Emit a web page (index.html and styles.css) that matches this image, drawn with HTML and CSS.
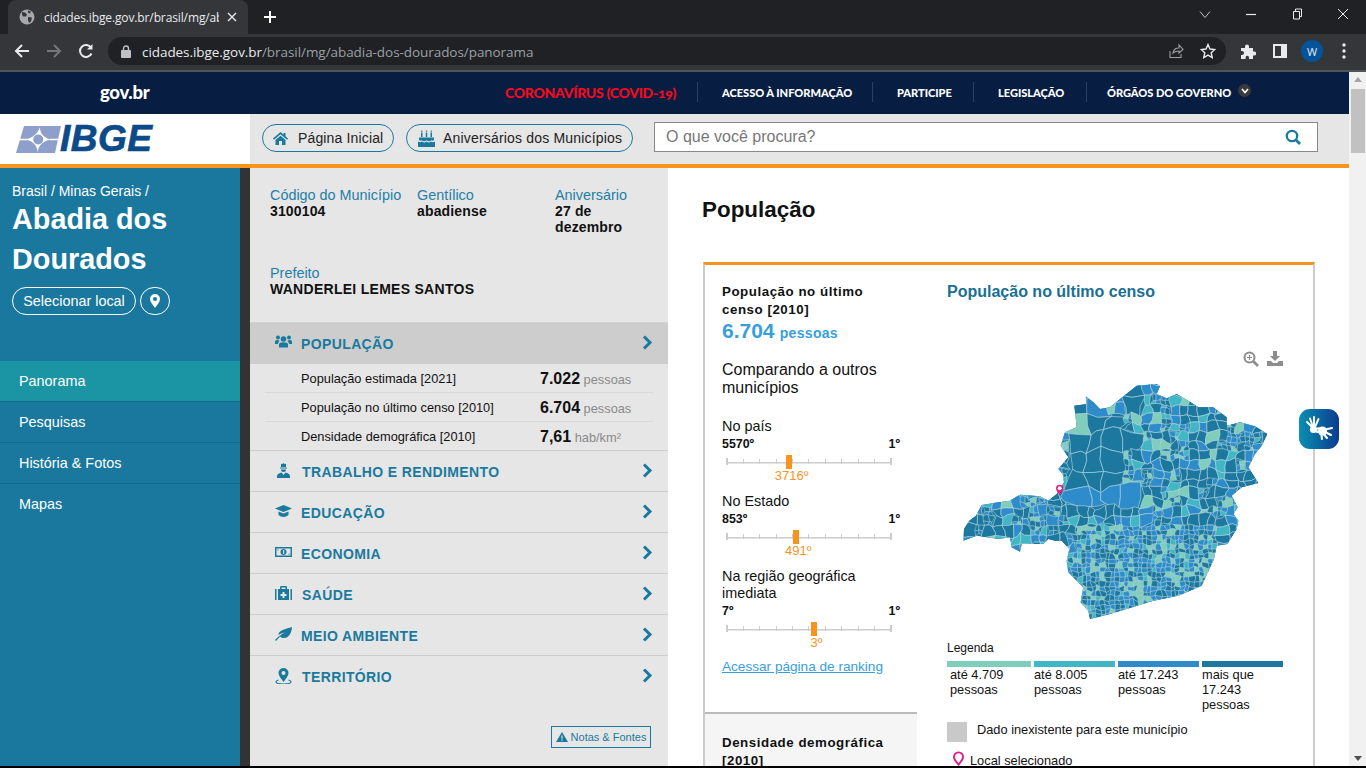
FILE: index.html
```html
<!DOCTYPE html>
<html lang="pt-BR">
<head>
<meta charset="utf-8">
<title>Abadia dos Dourados</title>
<link rel="stylesheet" href="styles.css">
</head>
<body>
<div class="window">
  <div class="tabstrip">
    <div class="tab">
      <svg class="globe" width="16" height="16" viewBox="0 0 16 16"><circle cx="8" cy="8" r="7.5" fill="#a6a8ab"/><path d="M3 3l3 .5 2 2-1 2-3 0-1-2zM9 8l4 .5-1 4-2 1.5-1-3zM9 1.5l3 1-1 2-2-1z" fill="#35363a"/></svg>
      <span class="tab-title">cidades.ibge.gov.br/brasil/mg/ab</span>
      <svg class="tab-x" width="10" height="10" viewBox="0 0 10 10"><path d="M1 1l8 8M9 1l-8 8" stroke="#e8eaed" stroke-width="1.4"/></svg>
    </div>
    <svg class="plus" width="12" height="12" viewBox="0 0 12 12"><path d="M6 0v12M0 6h12" stroke="#fff" stroke-width="2"/></svg>
    <div class="win-controls">
      <svg width="12" height="12" viewBox="0 0 12 12"><path d="M1 3.500l5 6 5-6" fill="none" stroke="#bdc1c6"/></svg>
      <svg width="12" height="12" viewBox="0 0 12 12"><path d="M1 6.500h10" stroke="#e8eaed" stroke-width="1.200"/></svg>
      <svg width="12" height="12" viewBox="0 0 12 12"><path d="M2.500 3.500h6v7.500h-6zM4.500 3.500V1h6v7.500H8.500" fill="none" stroke="#e8eaed"/></svg>
      <svg width="12" height="12" viewBox="0 0 12 12"><path d="M1 1l10 10M11 1L1 11" stroke="#e8eaed" stroke-width="1"/></svg>
    </div>
  </div>
  <div class="toolbar">
    <svg class="tool back" width="16" height="16" viewBox="0 0 16 16"><path d="M15 8H2M8 2L2 8l6 6" fill="none" stroke="#e8eaed" stroke-width="2"/></svg>
    <svg class="tool fwd" width="16" height="16" viewBox="0 0 16 16"><path d="M1 8h13M8 2l6 6-6 6" fill="none" stroke="#75777a" stroke-width="2"/></svg>
    <svg class="tool reload" width="16" height="16" viewBox="0 0 16 16"><path d="M13.500 10.500A6 6 0 1 1 13 4.600" fill="none" stroke="#e8eaed" stroke-width="2"/><path d="M14.500 1v5.500H9z" fill="#e8eaed"/></svg>
    <div class="omnibox">
      <svg width="10" height="13" viewBox="0 0 10 13"><path d="M2.500 5.500V3.500a2.500 2.500 0 0 1 5 0v2" fill="none" stroke="#bdc1c6" stroke-width="1.400"/><rect y="5" width="10" height="8" rx="1" fill="#bdc1c6"/></svg>
      <span class="url"><b>cidades.ibge.gov.br</b>/brasil/mg/abadia-dos-dourados/panorama</span>
      <svg class="share" width="16" height="16" viewBox="0 0 16 16"><path d="M2 8v6.500h11V11M5 10c.5-3.500 3-5 6-5V2l4 4.500L11 10V8c-2.500 0-4.500.5-6 2z" fill="none" stroke="#9aa0a6" stroke-width="1.100"/></svg>
      <svg class="star" width="16" height="16" viewBox="0 0 16 16"><path d="M8 1.500l2 4.500 4.800.5-3.600 3.200 1 4.800L8 12.100 3.800 14.500l1-4.800L1.200 6.500 6 6z" fill="none" stroke="#e8eaed" stroke-width="1.400"/></svg>
    </div>
    <svg class="ext" width="16" height="16" viewBox="0 0 16 16"><path d="M1 5h4V3.500a2 2 0 0 1 4 0V5h4v3.500h1.200a2 2 0 0 1 0 4H13V16H9v-1.500a1.700 1.700 0 0 0-3.400 0V16H1v-4h1a2 2 0 0 0 0-4H1z" fill="#e8eaed"/></svg>
    <svg class="panel-ic" width="14" height="14" viewBox="0 0 14 14"><path d="M0 0h14v14H0zM2 2v10h6V2z" fill="#e8eaed" fill-rule="evenodd"/><rect x="2" y="2" width="6" height="10" fill="#35363a"/></svg>
    <span class="avatar">W</span>
    <svg class="dots" width="4" height="16" viewBox="0 0 4 16"><circle cx="2" cy="2" r="1.700" fill="#e8eaed"/><circle cx="2" cy="8" r="1.700" fill="#e8eaed"/><circle cx="2" cy="14" r="1.700" fill="#e8eaed"/></svg>
  </div>
  <div class="viewport">
    <div class="page">
      <div class="govbar">
        <a class="gov-logo">gov.br</a>
        <a class="covid">CORONAVÍRUS (COVID-19)</a>
        <ul class="gov-links">
          <li class="gov-first">ACESSO À INFORMAÇÃO</li>
          <li class="gov-part">PARTICIPE</li>
          <li class="gov-leg">LEGISLAÇÃO</li>
          <li class="gov-org">ÓRGÃOS DO GOVERNO <span class="gov-badge"><svg width="8" height="6" viewBox="0 0 8 6"><path d="M1 1l3 3.500L7 1" fill="none" stroke="#fff" stroke-width="1.600"/></svg></span></li>
        </ul>
      </div>
      <div class="sitehead">
        <div class="logo">
          <svg width="45" height="27" viewBox="0 0 45 27"><path d="M8 0h37l-6 27H0z" fill="#8e9fcb"/><path d="M24 1c0 6 3 10.500 11 12.500C27 15 23 19 21.500 26 21 19 17 15 9 13.500 17 12 22 7 24 1z" fill="#fff"/><circle cx="22.200" cy="13.500" r="5" fill="#8e9fcb"/><path d="M1 13.500h10M34 13.500h9" stroke="#fff" stroke-width="1.300"/></svg>
          <span class="logo-word">IBGE</span>
        </div>
        <div class="head-tools">
          <a class="pill pill-home">
            <svg width="15" height="13" viewBox="0 0 15 13"><path d="M7.500 0L0 6.500l1 1.200 6.500-5.500L14 7.700l1-1.200-2.500-2.200V1h-2v1.600zM2.500 8v5h3.500V9h3v4h3.500V8L7.500 3.700z" fill="#1a7a9e"/></svg>
            Página Inicial
          </a>
          <a class="pill pill-bday">
            <svg width="17" height="17" viewBox="0 0 17 17"><path d="M1 7.500h15V10c-1 .9-1.800.9-2.600.2-1.600 1.300-3.200 1.300-4.900 0-1.700 1.300-3.300 1.300-4.900 0-.8.700-1.600.7-2.600-.2zM0 11.500c1.400 1.100 2.600 1.100 4 0 1.500 1.200 3 1.200 4.500 0 1.500 1.200 3 1.200 4.500 0 1.400 1.100 2.600 1.100 4 0V17H0zM3 2.500h1.500v4.500H3zM7.750 2.500h1.500v4.500h-1.500zM12.500 2.500H14v4.500h-1.500zM3.750 0l.9 1.700h-1.800zM8.500 0l.9 1.700H7.600zM13.250 0l.9 1.700h-1.800z" fill="#1a7a9e"/></svg>
            Aniversários dos Municípios
          </a>
          <div class="search">
            <span class="search-ph">O que você procura?</span>
            <svg width="16" height="16" viewBox="0 0 16 16"><circle cx="7" cy="7" r="5.200" fill="none" stroke="#1a7a9e" stroke-width="2.300"/><path d="M10.800 10.800l4.200 4.200" stroke="#1a7a9e" stroke-width="2.800"/></svg>
          </div>
        </div>
      </div>
      <div class="columns">
        <aside class="side">
          <div class="crumbs">Brasil / Minas Gerais /</div>
          <h1 class="city">Abadia dos Dourados</h1>
          <div class="side-btns">
            <a class="side-btn">Selecionar local</a>
            <a class="side-pin"><svg width="10" height="14" viewBox="0 0 10 14"><path d="M5 0a5 5 0 0 1 5 5c0 3-3 6-5 9-2-3-5-6-5-9a5 5 0 0 1 5-5zm0 3a2 2 0 1 0 0 4 2 2 0 0 0 0-4z" fill="#fff" fill-rule="evenodd"/></svg></a>
          </div>
          <nav class="side-nav">
            <a class="nav-item nav-on">Panorama</a>
            <a class="nav-item">Pesquisas</a>
            <a class="nav-item">História &amp; Fotos</a>
            <a class="nav-item nav-end">Mapas</a>
          </nav>
        </aside>
        <div class="divider"></div>
        <section class="panel">
          <div class="facts">
            <div class="fact"><span class="fact-k">Código do Município</span><b>3100104</b></div>
            <div class="fact"><span class="fact-k">Gentílico</span><b>abadiense</b></div>
            <div class="fact"><span class="fact-k">Aniversário</span><b>27 de dezembro</b></div>
          </div>
          <div class="mayor"><span class="fact-k">Prefeito</span><b>WANDERLEI LEMES SANTOS</b></div>
          <div class="accordion">
            <div class="acc-head acc-open">
              <svg class="acc-ic" width="17" height="14" viewBox="0 0 17 14"><circle cx="8.500" cy="4" r="2.800" fill="#1a7a9e"/><circle cx="3" cy="2.500" r="2" fill="#1a7a9e"/><circle cx="14" cy="2.500" r="2" fill="#1a7a9e"/><path d="M4 12.500V9.500C4 8 5.500 7.300 8.500 7.300S13 8 13 9.500v3zM0 9V6.500C0 5.500 1 5 3 5l1.500 1C3.500 7 3 7.700 3 9zM17 9V6.500C17 5.500 16 5 14 5l-1.500 1c1 1 1.500 1.700 1.500 3z" fill="#1a7a9e"/></svg>
              <span class="acc-t">POPULAÇÃO</span>
              <svg class="acc-chev" width="11" height="15" viewBox="0 0 11 15"><path d="M2 1.500L8 7.500 2 13.500" fill="none" stroke="#1a7a9e" stroke-width="3"/></svg>
            </div>
            <div class="rows">
              <div class="row"><span class="row-k">População estimada [2021]</span><span class="row-v"><b>7.022</b> pessoas</span></div>
              <div class="row"><span class="row-k">População no último censo [2010]</span><span class="row-v"><b>6.704</b> pessoas</span></div>
              <div class="row"><span class="row-k">Densidade demográfica [2010]</span><span class="row-v"><b>7,61</b> hab/km²</span></div>
            </div>
            <div class="acc-head">
              <svg class="acc-ic" width="17" height="15" viewBox="0 0 17 15"><path d="M8.500 0l1 1 1.500-.3V4H6V.7L7.500 1zM5 4.500h7v1H5zM6 6.500h5a2.500 2.500 0 0 1-5 0zM2 15v-2c0-2 2.500-3 4.500-3.500L8.500 12l2-2.500C12.500 10 15 11 15 13v2z" fill="#1a7a9e"/></svg>
              <span class="acc-t acc-nudge">TRABALHO E RENDIMENTO</span>
              <svg class="acc-chev" width="11" height="15" viewBox="0 0 11 15"><path d="M2 1.500L8 7.500 2 13.500" fill="none" stroke="#1a7a9e" stroke-width="3"/></svg>
            </div>
            <div class="acc-head">
              <svg class="acc-ic" width="17" height="12" viewBox="0 0 17 12"><path d="M8.500 0L17 3.500 8.500 7 0 3.500zM3.500 6.500l5 2 5-2V10c-1.500 1.300-3 2-5 2s-3.500-.7-5-2z" fill="#1a7a9e"/></svg>
              <span class="acc-t">EDUCAÇÃO</span>
              <svg class="acc-chev" width="11" height="15" viewBox="0 0 11 15"><path d="M2 1.500L8 7.500 2 13.500" fill="none" stroke="#1a7a9e" stroke-width="3"/></svg>
            </div>
            <div class="acc-head">
              <svg class="acc-ic" width="17" height="12" viewBox="0 0 17 12"><path d="M0 1h17v10H0zM1.500 2.500v7h14v-7z" fill="#1a7a9e" fill-rule="evenodd"/><circle cx="8.500" cy="6" r="3" fill="#1a7a9e"/><rect x="8" y="4" width="1.200" height="4" fill="#e6e6e6"/><path d="M2.500 3.500h1.500L2.500 5zM14.500 8.500H13l1.500-1.500z" fill="#1a7a9e"/></svg>
              <span class="acc-t">ECONOMIA</span>
              <svg class="acc-chev" width="11" height="15" viewBox="0 0 11 15"><path d="M2 1.500L8 7.500 2 13.500" fill="none" stroke="#1a7a9e" stroke-width="3"/></svg>
            </div>
            <div class="acc-head">
              <svg class="acc-ic" width="17" height="14" viewBox="0 0 17 14"><path d="M0 3h1.500v11H0zM15.500 3H17v11h-1.500zM3 3h2V1.500C5 .5 5.500 0 6.500 0h4c1 0 1.500.5 1.500 1.500V3h2v11H3zM6.500 1.500V3h4V1.500zM7.500 6v2h-2v2h2v2h2v-2h2V8h-2V6z" fill="#1a7a9e" fill-rule="evenodd"/></svg>
              <span class="acc-t acc-nudge">SAÚDE</span>
              <svg class="acc-chev" width="11" height="15" viewBox="0 0 11 15"><path d="M2 1.500L8 7.500 2 13.500" fill="none" stroke="#1a7a9e" stroke-width="3"/></svg>
            </div>
            <div class="acc-head">
              <svg class="acc-ic" width="17" height="14" viewBox="0 0 17 14"><path d="M17 0c-.5 6-3 11-8 11-1.500 0-3-.5-4-1.500C4 10.500 2.500 12.500 1 14L0 13c1.500-1.500 6-6 10-7.500C7 6 5 7 3.500 8 3.500 3 10 2.500 17 0z" fill="#1a7a9e"/></svg>
              <span class="acc-t">MEIO AMBIENTE</span>
              <svg class="acc-chev" width="11" height="15" viewBox="0 0 11 15"><path d="M2 1.500L8 7.500 2 13.500" fill="none" stroke="#1a7a9e" stroke-width="3"/></svg>
            </div>
            <div class="acc-head acc-last">
              <svg class="acc-ic" width="17" height="16" viewBox="0 0 17 16"><path d="M8.500 0a5 5 0 0 1 5 5c0 3-3 6-5 9-2-3-5-6-5-9a5 5 0 0 1 5-5zm0 3a2 2 0 1 0 0 4 2 2 0 0 0 0-4z" fill="#1a7a9e" fill-rule="evenodd"/><path d="M3.500 12c-2 .5-2.500 1-2.500 1.800C1 15 4 16 8.500 16s7.500-1 7.500-2.200c0-.8-.5-1.300-2.500-1.800" fill="none" stroke="#1a7a9e" stroke-width="1.200"/></svg>
              <span class="acc-t acc-nudge">TERRITÓRIO</span>
              <svg class="acc-chev" width="11" height="15" viewBox="0 0 11 15"><path d="M2 1.500L8 7.500 2 13.500" fill="none" stroke="#1a7a9e" stroke-width="3"/></svg>
            </div>
          </div>
          <div class="notes-wrap">
            <a class="notes"><svg width="12" height="10" viewBox="0 0 12 10"><path d="M6 0l6 10H0zM5.400 3.500v3.300h1.200V3.500zM5.400 7.500v1.200h1.200V7.500z" fill="#1a7a9e" fill-rule="evenodd"/></svg>Notas &amp; Fontes</a>
          </div>
        </section>
        <main class="content">
          <h2 class="content-title">População</h2>
          <div class="card">
            <div class="card-left">
              <div class="kpi">
                <h3 class="kpi-t">População no último censo [2010]</h3>
                <div class="kpi-v"><b>6.704</b> <span>pessoas</span></div>
                <p class="compare">Comparando a outros municípios</p>
                <div class="rank">
                  <div class="rank-t">No país</div>
                  <div class="rank-ends"><b>5570º</b><b>1º</b></div>
                  <div class="slider"><i></i><i></i><i></i><i></i><i></i><i></i><i></i><i></i><i></i><i></i><i></i><span class="mark" style="left:38%"><u></u><em>3716º</em></span></div>
                </div>
                <div class="rank">
                  <div class="rank-t">No Estado</div>
                  <div class="rank-ends"><b>853º</b><b>1º</b></div>
                  <div class="slider"><i></i><i></i><i></i><i></i><i></i><i></i><i></i><i></i><i></i><i></i><i></i><span class="mark" style="left:42%"><u></u><em>491º</em></span></div>
                </div>
                <div class="rank">
                  <div class="rank-t">Na região geográfica imediata</div>
                  <div class="rank-ends"><b>7º</b><b>1º</b></div>
                  <div class="slider"><i></i><i></i><i></i><i></i><i></i><i></i><i></i><i></i><i></i><i></i><i></i><span class="mark" style="left:53%"><u></u><em>3º</em></span></div>
                </div>
                <a class="rank-link">Acessar página de ranking</a>
              </div>
              <div class="kpi-next"><h3 class="kpi-t">Densidade demográfica [2010]</h3></div>
            </div>
            <div class="card-right">
              <h3 class="map-title">População no último censo</h3>
              <div class="map-tools">
                <svg width="16" height="16" viewBox="0 0 16 16"><circle cx="6.500" cy="6.500" r="5" fill="none" stroke="#8c8c8c" stroke-width="2"/><path d="M10.500 10.500L15 15" stroke="#8c8c8c" stroke-width="2.600"/><path d="M4 6.500h5M6.500 4v5" stroke="#8c8c8c" stroke-width="1.200"/></svg>
                <svg width="16" height="15" viewBox="0 0 16 15"><path d="M6 0h4v5h3l-5 5-5-5h3zM0 10h4l2 2h4l2-2h4v5H0z" fill="#8c8c8c"/></svg>
              </div>
              <svg id="mg-map" class="map" viewBox="21 90 1008 810" role="img" aria-label="Mapa de Minas Gerais"></svg>
              <div class="legend">
                <div class="legend-t">Legenda</div>
                <div class="legend-grid">
                  <div class="lg lg1">até 4.709 pessoas</div>
                  <div class="lg lg2">até 8.005 pessoas</div>
                  <div class="lg lg3">até 17.243 pessoas</div>
                  <div class="lg lg4">mais que 17.243 pessoas</div>
                </div>
                <div class="nodata"><span class="swatch"></span><span class="nodata-t">Dado inexistente para este município</span></div>
                <div class="selected"><svg width="11" height="15" viewBox="0 0 12 15"><path d="M6 .8a5 5 0 0 1 5 5c0 3-3 5.500-5 8.500-2-3-5-5.500-5-8.500a5 5 0 0 1 5-5z" fill="none" stroke="#e6197e" stroke-width="2"/></svg><span class="selected-t">Local selecionado</span></div>
              </div>
            </div>
          </div>
        </main>
      </div>
      <a class="libras"><svg width="32" height="30" viewBox="0 0 32 30"><g stroke="#fff" stroke-linecap="round" fill="none"><path d="M10 14L4 8M10 13L7 4.500M11 13V3M12 13L15.500 5M12 15l6-1" stroke-width="1.900"/><path d="M20 16l9-2M20 17l8 4M19 18l5 6M18 18l1 7M20 15l-6 3" stroke-width="2.100"/></g><circle cx="10.500" cy="15.500" r="3.600" fill="#fff"/><circle cx="19.500" cy="17" r="4.600" fill="#fff"/></svg></a>
    </div>
    <div class="scrollbar">
      <span class="sb-up"></span>
      <span class="sb-thumb"></span>
      <span class="sb-down"></span>
    </div>
  </div>
</div>
<script src="map.js"></script>
</body>
</html>
```

FILE: styles.css
```css
* { box-sizing: border-box; }
html, body { margin: 0; height: 100%; overflow: hidden; background: #000; }
body { font-family: "Liberation Sans", Arial, sans-serif; color: #111; }
h1, h2, h3, p, ul { margin: 0; padding: 0; }
b { font-weight: 700; }

.window { width: 1366px; height: 766px; display: flex; flex-direction: column; overflow: hidden; position: relative; }

/* browser chrome */
.tabstrip { height: 34px; flex: none; background: #202124; display: flex; align-items: center; padding-left: 8px; }
.tab { width: 240px; height: 34px; background: #35363a; border-radius: 8px 8px 0 0; display: flex; align-items: center; padding: 0 11px; }
.globe { flex: none; margin-right: 9px; }
.tab-title { width: 175px; overflow: hidden; white-space: nowrap; color: #e8eaed; font: 12px "Open Sans", sans-serif; letter-spacing: -.12px; }
.tab-x { margin-left: 8px; flex: none; }
.plus { margin-left: 16px; }
.win-controls { margin-left: auto; display: flex; gap: 34px; padding-right: 17px; align-items: center; margin-top: -6px; }
.toolbar { height: 36px; flex: none; background: #35363a; display: flex; align-items: center; padding: 0 0 2px 14px; position: relative; }
.tool { flex: none; margin-right: 16px; }
.omnibox { width: 1118px; height: 28px; margin-left: -2px; background: #202124; border-radius: 14px; display: flex; align-items: center; padding: 0 10px 0 13px; flex: none; }
.url { margin-left: 11px; padding-top: 1px; font: 13.500px "Open Sans", sans-serif; color: #9aa0a6; letter-spacing: -.06px; white-space: nowrap; }
.url b { font-weight: 400; color: #e8eaed; }
.share { margin-left: auto; }
.star { margin-left: 16px; }
.ext { margin-left: 14px; flex: none; }
.panel-ic { margin-left: 17px; flex: none; }
.avatar { margin-left: 14px; width: 22px; height: 22px; border-radius: 50%; background: #04549b; color: #e8eaed; font: 11px "Open Sans", sans-serif; display: flex; align-items: center; justify-content: center; flex: none; }
.dots { margin-left: 19px; flex: none; }

/* page */
.viewport { flex: 1; min-height: 0; display: flex; border-top: 2px solid #50565c; }
.page { width: 1349px; flex: none; display: flex; flex-direction: column; position: relative; background: #fff; overflow: hidden; }
.scrollbar { width: 17px; flex: none; background: #f1f1f1; position: relative; display: flex; flex-direction: column; align-items: center; }
.sb-up { margin-top: 5px; width: 0; height: 0; border: 4px solid transparent; border-top: 0; border-bottom: 5px solid #a3a3a3; }
.sb-thumb { width: 14px; height: 64px; margin-top: 7px; background: #c1c1c1; }
.sb-down { margin-top: auto; margin-bottom: 5px; width: 0; height: 0; border: 4px solid transparent; border-bottom: 0; border-top: 5px solid #505050; }

.govbar { height: 42px; flex: none; background: #071d41; color: #fff; display: flex; align-items: center; font-family: Lato, sans-serif; font-weight: 900; position: relative; padding-bottom: 2px; }
.gov-logo { margin-left: 100px; width: 50px; font-size: 18.500px; letter-spacing: -.3px; white-space: nowrap; }
.covid { margin-left: 355px; width: 192px; color: #f5091f; font-size: 14px; letter-spacing: -.3px; white-space: nowrap; font-variant-numeric: oldstyle-nums; }
.gov-links { list-style: none; display: flex; align-items: center; font-size: 11.100px; letter-spacing: -.05px; }
.gov-links li { height: 20px; display: flex; align-items: center; white-space: nowrap; }
.gov-first { padding: 0 20px 0 24px; border-left: 1px solid #2a3f63; width: 175px; }
.gov-part { padding: 0 20px 0 24px; border-left: 1px solid #2a3f63; width: 101px; }
.gov-leg { padding: 0 20px 0 24px; border-left: 1px solid #2a3f63; width: 113px; }
.gov-org { padding: 0 0 0 20px; border-left: 1px solid #2a3f63; }
.gov-badge { margin: -3px 0 0 7px; width: 13px; height: 13px; border-radius: 50%; background: #3a3a3a; display: inline-flex; align-items: center; justify-content: center; }

.sitehead { height: 54px; flex: none; display: flex; background: #e6e6e6; border-bottom: 4px solid #f7941d; }
.logo { width: 250px; background: #fff; display: flex; align-items: center; padding-left: 16px; flex: none; }
.logo-word { font: italic 700 37px "Liberation Sans", sans-serif; color: #0c4a8a; margin-left: -1px; letter-spacing: .5px; -webkit-text-stroke: .7px #0c4a8a; }
.head-tools { flex: 1; display: flex; align-items: center; padding-left: 12px; }
.pill { height: 28px; border: 1.500px solid #1a7a9e; border-radius: 14px; display: flex; align-items: center; font-size: 14px; color: #222; gap: 9px; flex: none; margin-top: -2px; }
.pill-home { width: 132px; padding-left: 10px; gap: 10px; letter-spacing: .15px; }
.pill-bday { width: 227px; margin-left: 12px; padding-left: 11px; letter-spacing: .18px; gap: 8px; }
.search { width: 664px; height: 30px; margin-left: 21px; margin-top: -4px; background: #fff; border: 1px solid #888; display: flex; align-items: center; justify-content: space-between; padding: 0 16px 0 11px; }
.search-ph { font-size: 16px; color: #777; }

.columns { flex: 1; min-height: 0; display: flex; }
.side { width: 240px; flex: none; background: #1a789e; color: #fff; padding-top: 15px; }
.crumbs { padding-left: 12px; font-size: 14px; line-height: 16px; }
.city { padding: 0 12px; font-size: 28.800px; font-weight: 700; line-height: 40px; }
.side-btns { display: flex; gap: 4px; padding-left: 12px; margin-top: 8px; }
.side-btn { width: 124px; height: 28px; border: 1px solid #fff; border-radius: 14px; font-size: 14.400px; display: flex; align-items: center; justify-content: center; }
.side-pin { width: 30px; height: 28px; border: 1px solid #fff; border-radius: 14px; display: flex; align-items: center; justify-content: center; }
.side-nav { margin-top: 46px; display: flex; flex-direction: column; }
.nav-item { height: 41px; padding-left: 19px; display: flex; align-items: center; font-size: 14.400px; border-bottom: 1px solid #16688a; }
.nav-on { background: #1b95a3; }
.nav-end { border-bottom-color: transparent; }
.divider { width: 10px; flex: none; background: #333; }

.panel { width: 418px; flex: none; background: #e6e6e6; display: flex; flex-direction: column; }
.facts { display: flex; padding: 19px 0 0 20px; line-height: 16px; height: 97px; }
.fact { display: flex; flex-direction: column; }
.fact:nth-child(1) { width: 147px; }
.fact:nth-child(2) { width: 138px; }
.fact:nth-child(3) { width: 90px; }
.fact b { font-size: 14px; color: #111; letter-spacing: .15px; }
.fact-k { color: #1f7fa6; font-size: 14.400px; line-height: 16px; }
.mayor { padding: 0 0 0 20px; font-size: 14px; line-height: 16px; display: flex; flex-direction: column; height: 57px; }
.mayor b { letter-spacing: .28px; }
.accordion { border-top: 1px solid #d2d2d2; }
.acc-head { height: 41px; display: flex; align-items: center; border-bottom: 1px solid #cdcdcd; padding-left: 25px; position: relative; }
.acc-open { background: #cdcdcd; }
.acc-ic { flex: none; width: 17px; margin-right: 9px; margin-top: -2px; }
.acc-t { color: #1a7a9e; font-size: 14px; font-weight: 700; letter-spacing: .38px; white-space: nowrap; padding-top: 1px; }
.acc-nudge { margin-left: 1px; }
.acc-chev { position: absolute; left: 392px; top: 12px; }
.acc-last { border-bottom: 0; }
.rows { padding: 0 15px; border-bottom: 1px solid #cdcdcd; }
.row { height: 29px; display: flex; align-items: center; border-bottom: 1px solid #d9d9d9; padding: 1px 0 0 36px; font-size: 12.800px; }
.row:last-child { border-bottom: 0; height: 28px; }
.row-k { width: 239px; flex: none; }
.row-v { color: #8a8a8a; font-size: 12.800px; white-space: nowrap; }
.row-v b { color: #111; font-size: 16px; }
.notes-wrap { margin-top: 29px; padding-right: 17px; display: flex; justify-content: flex-end; }
.notes { width: 100px; height: 22px; border: 1px solid #1a7a9e; color: #1a7a9e; display: flex; align-items: center; justify-content: center; gap: 3px; font-size: 11px; }

.content { flex: 1; min-width: 0; background: #fff; padding: 30px 33px 0 34px; }
.content-title { font-size: 22.400px; font-weight: 700; line-height: 24px; letter-spacing: .02px; color: #111; }
.card { margin: 40px 0 0 1px; width: 612px; display: flex; border-top: 3px solid #f7941d; border-left: 2px solid #ccc; border-right: 2px solid #ccc; height: 520px; }
.card-left { width: 212px; flex: none; display: flex; flex-direction: column; }
.kpi { padding: 18px 17px 0 17px; height: 447px; flex: none; }
.kpi-t { font-size: 13.300px; font-weight: 700; line-height: 18px; letter-spacing: .55px; color: #111; }
.kpi-v { color: #37a0dc; font-size: 14px; font-weight: 700; line-height: 24px; letter-spacing: .3px; }
.kpi-v b { font-size: 21px; letter-spacing: 0; margin-right: 1px; }
.compare { margin-top: 16px; font-size: 16px; line-height: 18px; }
.rank { margin-top: 21px; }
.rank + .rank { margin-top: 14px; }
.rank-t { font-size: 14.400px; line-height: 17px; }
.rank-ends { display: flex; justify-content: space-between; font-size: 12.400px; line-height: 17px; width: 178px; margin-top: 1px; }
.slider { position: relative; height: 26px; width: 166px; margin-left: 4px; display: flex; justify-content: space-between; align-items: flex-start; padding-top: 6px; background: linear-gradient(#ccc, #ccc) 0 9px / 100% 1.500px no-repeat; }
.slider i { width: 1px; height: 5px; background: #ccc; display: block; }
.slider i:first-child, .slider i:nth-child(11) { height: 7px; margin-top: -1px; width: 1.500px; }
.mark { position: absolute; top: 2px; width: 0; display: flex; flex-direction: column; align-items: center; }
.mark u { display: block; flex: none; width: 6px; height: 14px; background: #f7941d; text-decoration: none; }
.mark em { font-style: normal; font-size: 13px; line-height: 13px; color: #f7941d; white-space: nowrap; margin-left: 5px; }
.rank-link { display: block; margin-top: 12px; color: #37a0dc; font-size: 13.600px; line-height: 18px; text-decoration: underline; white-space: nowrap; }
.kpi-next { flex: 1; background: #f5f5f5; border-top: 2px solid #bbb; padding: 20px 17px 0; }
.card-right { flex: 1; padding: 17px 30px 0 30px; min-width: 0; }
.map-title { font-size: 16px; font-weight: 700; line-height: 20px; color: #1a6f95; }
.map-tools { margin-top: 49px; display: flex; justify-content: flex-end; gap: 8px; height: 16px; }
.map { display: block; width: 336px; height: 270px; margin-top: 2px; }
.legend { font-size: 12.800px; line-height: 15px; }
.legend-t { margin-top: 2px; font-size: 12px; }
.legend-grid { display: grid; grid-template-columns: 84px 81px 81px 81px; column-gap: 3px; margin-top: 5px; }
.lg { border-top: 6px solid; padding: 0 3px; min-height: 61px; }
.lg2, .lg3, .lg4 { padding-left: 0; padding-right: 12px; }
.lg1 { border-color: #7fcdbb; }
.lg2 { border-color: #41b6c4; }
.lg3 { border-color: #2f8ccb; }
.lg4 { border-color: #1c789e; }
.nodata { display: flex; align-items: center; height: 20px; }
.nodata-t { padding-bottom: 5px; }
.swatch { width: 20px; height: 20px; background: #c9c9c9; margin-right: 10px; }
.selected { display: flex; align-items: flex-start; margin-top: 9px; gap: 6px; padding-left: 6px; }
.selected-t { margin-top: 2px; }

.libras { position: absolute; left: 1299px; top: 337px; width: 40px; height: 40px; border-radius: 11px; background: linear-gradient(90deg, #0a8fb3, #0b3c8f); display: flex; align-items: center; justify-content: center; }
```

FILE: map.js
```js
(function () {
  var svg = document.getElementById('mg-map');
  var NS = 'http://www.w3.org/2000/svg';
  var outline = [70,605,72,570,88,545,108,530,125,498,175,490,210,485,240,467,300,472,325,485,350,465,372,430,368,405,355,390,385,355,362,320,375,280,410,265,403,200,440,195,437,172,460,190,480,210,510,205,540,180,590,140,650,135,660,142,650,165,680,178,710,165,745,185,775,205,820,205,860,235,860,260,900,250,945,262,982,285,965,320,945,345,925,385,955,432,905,445,875,470,893,505,880,525,895,545,890,570,862,615,830,620,822,660,785,740,715,770,640,785,560,810,510,825,450,840,445,815,422,790,430,745,385,700,380,665,388,630,365,605,345,605,325,600,310,615,275,615,245,615,240,638,215,625,210,595,175,600,110,590];
  var colors = ['#1c789e', '#2f8ccb', '#41b6c4', '#7fcdbb'];

  function h(x, y, k) {
    var v = Math.sin(x * 12.9898 + y * 78.233 + k * 37.719) * 43758.5453;
    return v - Math.floor(v);
  }
  function target(x, y) {
    if (y > 640) return 14;
    if (y > 570 && x > 420 && x < 830) return x > 600 ? 14 : 20;
    if (y > 500 && x > 380) return 28;
    if (x > 760) return 28;
    if (x < 380) return 44;
    if (x > 620) return 36;
    return 56;
  }
  function vertex(x, y, s) {
    var j = s * 0.7;
    return [x + (h(x, y, 1) - 0.5) * j, y + (h(x, y, 2) - 0.5) * j];
  }
  function weights(s) {
    if (s >= 56) return [0.72, 0.16, 0.06, 0.06];
    if (s >= 28) return [0.5, 0.27, 0.13, 0.1];
    return [0.38, 0.3, 0.1, 0.22];
  }
  function pick(x, y, s) {
    var r = h(x, y, 5), w = weights(s), c = 0;
    for (var i = 0; i < 4; i++) {
      c += w[i];
      if (r < c) return colors[i];
    }
    return colors[0];
  }
  var cells = [];
  function cell(x, y, s) {
    var t = target(x + s / 2, y + s / 2);
    if (s > t * 1.01 || (s > 24 && h(x, y, 7) < 0.22)) {
      var n = s / 2;
      cell(x, y, n); cell(x + n, y, n); cell(x, y + n, n); cell(x + n, y + n, n);
      return;
    }
    var corners = [[x, y], [x + s, y], [x + s, y + s], [x, y + s]];
    var pts = [];
    for (var i = 0; i < 4; i++) {
      var a = corners[i], b = corners[(i + 1) % 4];
      var va = vertex(a[0], a[1], s), vb = vertex(b[0], b[1], s);
      var mx = (a[0] + b[0]) / 2, my = (a[1] + b[1]) / 2;
      var wob = s * 0.3;
      pts.push(va[0].toFixed(1) + ',' + va[1].toFixed(1));
      pts.push(((va[0] + vb[0]) / 2 + (h(mx, my, 3) - 0.5) * wob).toFixed(1) + ',' + ((va[1] + vb[1]) / 2 + (h(mx, my, 4) - 0.5) * wob).toFixed(1));
    }
    cells.push({ pts: pts.join(' '), fill: pick(x, y, s), s: s });
  }
  for (var gx = 48; gx < 1008; gx += 112) {
    for (var gy = 112; gy < 896; gy += 112) cell(gx, gy, 112);
  }

  var defs = document.createElementNS(NS, 'defs');
  var clip = document.createElementNS(NS, 'clipPath');
  clip.setAttribute('id', 'mg-clip');
  var out = document.createElementNS(NS, 'polygon');
  out.setAttribute('points', outline.join(' '));
  clip.appendChild(out);
  defs.appendChild(clip);
  svg.appendChild(defs);

  var g = document.createElementNS(NS, 'g');
  g.setAttribute('clip-path', 'url(#mg-clip)');
  var base = document.createElementNS(NS, 'rect');
  base.setAttribute('x', 0); base.setAttribute('y', 0);
  base.setAttribute('width', 1200); base.setAttribute('height', 900);
  base.setAttribute('fill', '#1c789e');
  g.appendChild(base);
  cells.forEach(function (c) {
    var p = document.createElementNS(NS, 'polygon');
    p.setAttribute('points', c.pts);
    p.setAttribute('fill', c.fill);
    p.setAttribute('stroke', '#b4d6e0');
    p.setAttribute('stroke-width', c.s < 24 ? 1.4 : 1.9);
    g.appendChild(p);
  });
  svg.appendChild(g);

  var pin = document.createElementNS(NS, 'g');
  pin.innerHTML = '<path d="M359 468c-5-8-11-13-11-20a11 11 0 0 1 22 0c0 7-6 12-11 20z" fill="#e6197e"/><circle cx="359" cy="448" r="6" fill="#fff"/>';
  svg.appendChild(pin);
})();
```
